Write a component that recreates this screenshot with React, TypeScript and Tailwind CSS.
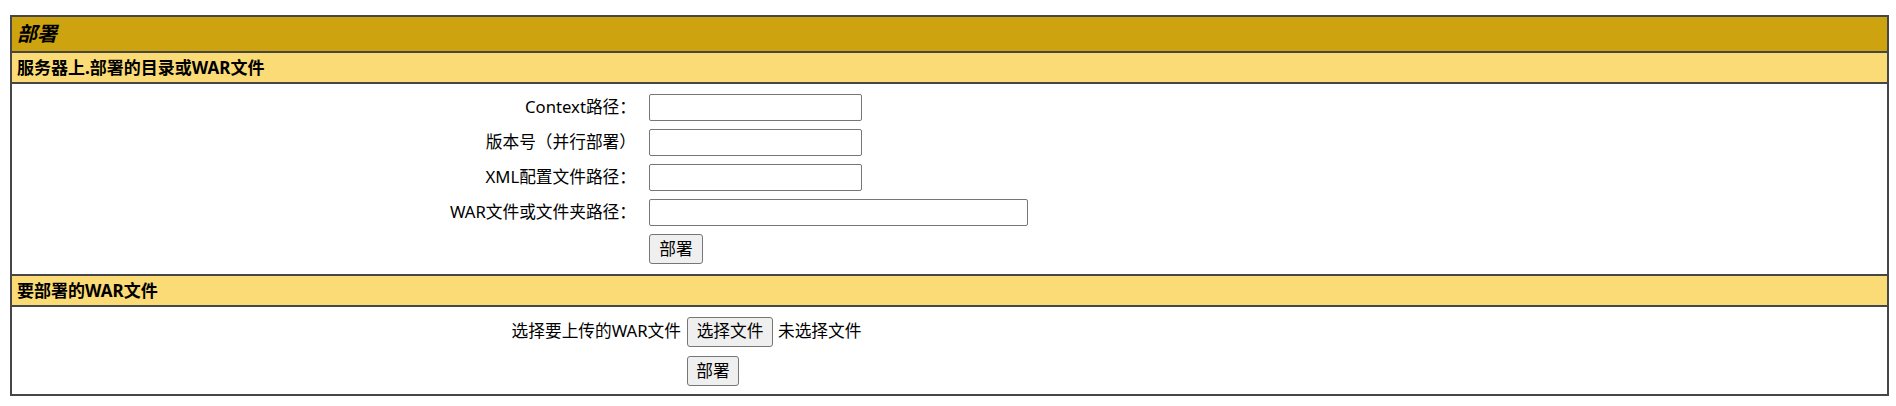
import React from "react";

const font = "font-['Noto_Sans','Noto_Sans_CJK_SC',sans-serif]";

const serverFields = [
  { label: "Context路径：", width: "w-[213px]" },
  { label: "版本号（并行部署）", width: "w-[213px]" },
  { label: "XML配置文件路径：", width: "w-[213px]" },
  { label: "WAR文件或文件夹路径：", width: "w-[379px]" },
];

const Btn = ({ children, className = "" }: { children: React.ReactNode; className?: string }) => (
  <button
    type="button"
    className={`h-[30px] px-[8px] bg-[#efefef] border border-[#767676] rounded-[3px] text-[16.7px] leading-none text-black ${className}`}
  >
    {children}
  </button>
);

export default function App() {
  return (
    <div className={`bg-white w-[1896px] h-[406px] pt-[15px] ${font} text-black`}>
      <div className="ml-[10px] w-[1879px] border-2 border-[#464646] flex flex-col">
        {/* 标题 */}
        <div className="h-[34px] bg-[#CDA40F] px-[5px] flex items-center text-[20px] font-bold italic leading-none">
          部署
        </div>

        {/* 服务器上的目录 */}
        <div className="h-[31px] border-t-2 border-[#464646] bg-[#FADB75] px-[5px] flex items-center text-[17px] font-bold leading-none">
          服务器上.部署的目录或WAR文件
        </div>
        <div className="border-t-2 border-[#464646] pt-[10px] pb-[10px] flex flex-col gap-[8px]">
          {serverFields.map((f) => (
            <div key={f.label} className="flex items-center h-[27px]">
              <div className="w-[624px] text-right text-[16.7px] leading-none">{f.label}</div>
              <div
                className={`ml-[13px] h-[27px] ${f.width} border border-[#767676] rounded-[2px] bg-white`}
              />
            </div>
          ))}
          <div className="flex">
            <div className="w-[624px]" />
            <Btn className="ml-[13px] w-[54px]">部署</Btn>
          </div>
        </div>

        {/* 上传 WAR */}
        <div className="h-[31px] border-t-2 border-[#464646] bg-[#FADB75] px-[5px] flex items-center text-[17px] font-bold leading-none">
          要部署的WAR文件
        </div>
        <div className="border-t-2 border-[#464646] pt-[10px] pb-[8px] flex flex-col gap-[10px]">
          <div className="flex items-center h-[29px]">
            <div className="w-[669px] text-right text-[16.7px] leading-none">选择要上传的WAR文件</div>
            <Btn className="ml-[6px] h-[29px] w-[86px]">选择文件</Btn>
            <span className="ml-[5px] text-[16.7px] leading-none">未选择文件</span>
          </div>
          <div className="flex">
            <div className="w-[669px]" />
            <Btn className="ml-[6px] h-[28px] w-[52px]">部署</Btn>
          </div>
        </div>
      </div>
    </div>
  );
}
